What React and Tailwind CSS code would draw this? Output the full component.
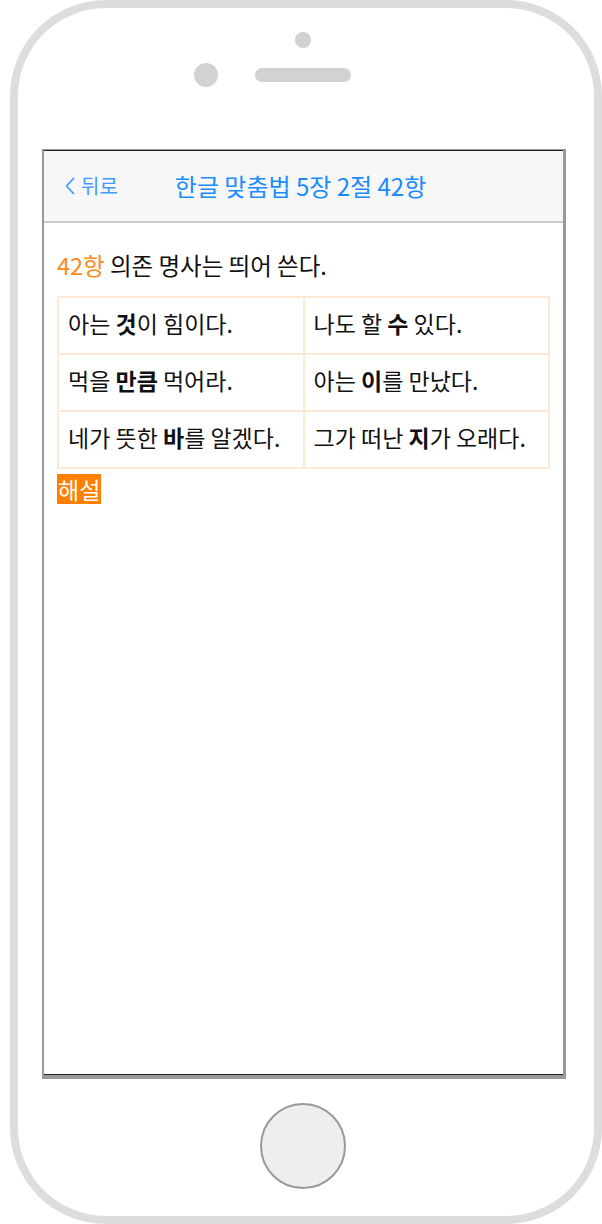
import React from 'react';

const FONT = { fontFamily: '"Noto Sans CJK KR", "Noto Sans", sans-serif' };

const rows = [
  [
    <>아는 <b>것</b>이 힘이다.</>,
    <>나도 할 <b>수</b> 있다.</>,
  ],
  [
    <>먹을 <b>만큼</b> 먹어라.</>,
    <>아는 <b>이</b>를 만났다.</>,
  ],
  [
    <>네가 뜻한 <b>바</b>를 알겠다.</>,
    <>그가 떠난 <b>지</b>가 오래다.</>,
  ],
];

function BackChevron() {
  return (
    <svg width="10" height="18" viewBox="0 0 10 18" fill="none" stroke="currentColor" strokeWidth="1.8" strokeLinecap="round" strokeLinejoin="round">
      <path d="M8.5 1.5L1.5 9l7 7.5" />
    </svg>
  );
}

export default function App() {
  return (
    <div className="w-[602px] h-[1224px] overflow-hidden bg-white" style={FONT}>
      <div className="ml-[10px] w-[592px] h-[1224px] border-8 border-[#dddddd] rounded-[96px] flex flex-col">
        {/* speaker dot */}
        <div className="ml-[277px] mt-[24px] w-4 h-4 rounded-full bg-[#d1d2d4]" />
        {/* camera + speaker bar */}
        <div className="flex items-center mt-[15px] ml-[176px]">
          <div className="w-6 h-6 rounded-full bg-[#d1d2d4]" />
          <div className="ml-[37px] w-[96px] h-[14px] rounded-full bg-[#d1d2d4]" />
        </div>

        {/* screen */}
        <div className="ml-[24px] mt-[62px] w-[524px] h-[930px] border-[#999999] border-l-2 border-t border-r-[3px] border-b-4 flex flex-col">
          <div className="flex-1 flex flex-col border-t border-b border-[#222222]">
            <div className="h-[72px] bg-[#f7f7f7] border-b-2 border-[#cccccc] flex items-center pl-[21px]">
              <div className="flex items-center text-[#3f9bff]">
                <BackChevron />
                <span className="ml-[6px] text-[20px] leading-none">뒤로</span>
              </div>
              <div className="ml-[57px] text-[24px] leading-none text-[#1a8cff]">한글 맞춤법 5장 2절 42항</div>
            </div>

            <div className="px-[13px] pt-[28px] text-[#111111]">
              <p className="text-[23.5px] leading-[28px]">
                <span className="text-[#ff8a1a]">42항</span> 의존 명사는 띄어 쓴다.
              </p>
              <table className="mt-[17px] w-[493px] table-fixed border-collapse text-[23px]">
                <tbody>
                  {rows.map((r, i) => (
                    <tr key={i}>
                      {r.map((c, j) => (
                        <td key={j} className="h-[57px] border-2 border-[#ffe9d6] pl-[9px] pb-[4px] align-middle">
                          {c}
                        </td>
                      ))}
                    </tr>
                  ))}
                </tbody>
              </table>
              <div className="mt-[5px] inline-block bg-[#ff8000] text-white text-[23px] leading-[30px] px-[1px]">해설</div>
            </div>
          </div>
        </div>

        {/* home button */}
        <div className="ml-[242px] mt-[24px] w-[86px] h-[86px] rounded-full bg-[#eeeeee] border-2 border-[#999999]" />
      </div>
    </div>
  );
}
